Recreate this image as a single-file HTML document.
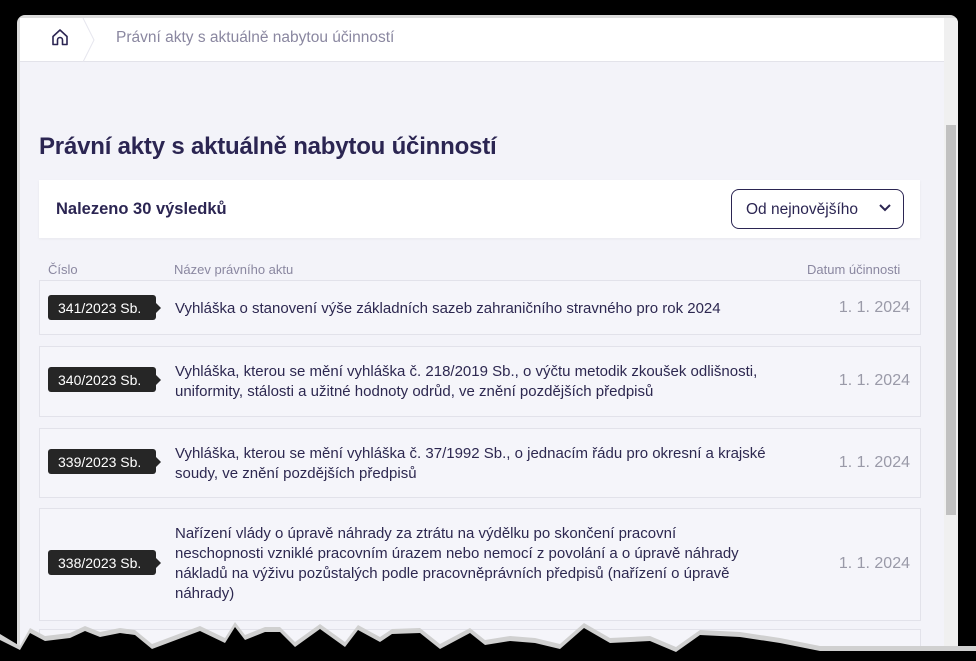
<!DOCTYPE html>
<html><head><meta charset="utf-8"><style>
*{box-sizing:border-box;margin:0;padding:0}
body{width:976px;height:661px;background:#000;position:relative;overflow:hidden;font-family:"Liberation Sans",sans-serif}
.win{position:absolute;left:17px;top:15px;width:941px;height:640px;background:#dcdcdc;border-radius:8px;overflow:hidden}
.page{position:absolute;left:3px;top:3px;width:924px;height:640px;background:#f3f3f9}
.hdr{position:absolute;left:0;top:0;width:924px;height:44px;background:#fff;border-bottom:1px solid #e3e3ea}
.crumb{position:absolute;left:96px;top:11px;font-size:15.5px;color:#8a87a0}
.sep{position:absolute;left:62px;top:0}
.sb{position:absolute;left:927px;top:3px;width:14px;height:640px;background:#f0f0f0}
.thumb{position:absolute;left:929px;top:110px;width:10px;height:390px;background:#c1c1c1}
h1{position:absolute;left:19px;top:115px;font-size:24px;font-weight:bold;color:#2b2552;letter-spacing:-0.2px}
.card{position:absolute;left:19px;top:162px;width:881px;height:58px;background:#fff;box-shadow:0 1px 3px rgba(0,0,0,.05)}
.card b{position:absolute;left:17px;top:20px;font-size:16.5px;color:#2b2552}
.sel{position:absolute;left:692px;top:9px;width:173px;height:40px;border:1px solid #2b2552;border-radius:8px;font-size:15.5px;color:#2b2552;padding:11px 0 0 14px}
.sel svg{position:absolute;right:12px;top:14px}
.th{position:absolute;top:244px;font-size:13px;color:#8a87a0}
.row{position:absolute;left:19px;width:882px;border:1px solid #e2e2ea;background:#f5f5fa}
.tag{position:absolute;left:8px;width:108px;height:25px;background:#262626;color:#fff;font-size:14px;border-radius:3px;padding:5px 0 0 10px}
.tag:after{content:"";position:absolute;right:-5px;top:8px;border-left:5px solid #262626;border-top:5px solid transparent;border-bottom:5px solid transparent}
.txt{position:absolute;left:135px;font-size:15px;line-height:20px;color:#2d2850;width:592px}
.dt{position:absolute;right:10px;font-size:16px;color:#9a9aa8}
</style></head><body>
<div class="win">
<div class="page">
 <div class="hdr">
  <svg style="position:absolute;left:31px;top:9px" width="18" height="20" viewBox="0 0 18 20"><path d="M2 9.5 L9 3 L16 9.5 V17.5 H11.5 V13 a2.5 2.5 0 0 0 -5 0 V17.5 H2 Z" fill="none" stroke="#2b2552" stroke-width="1.6" stroke-linejoin="round"/></svg>
  <svg class="sep" width="14" height="44"><path d="M1 0 L12 22 L1 44" fill="none" stroke="#e6e6ee" stroke-width="1"/></svg>
  <div class="crumb">Právní akty s aktuálně nabytou účinností</div>
 </div>
 <h1>Právní akty s aktuálně nabytou účinností</h1>
 <div class="card"><b>Nalezeno 30 výsledků</b>
  <div class="sel">Od nejnovějšího<svg width="12" height="8"><path d="M1 1 L6 6 L11 1" fill="none" stroke="#2b2552" stroke-width="2"/></svg></div>
 </div>
 <div class="th" style="left:28px">Číslo</div>
 <div class="th" style="left:154px">Název právního aktu</div>
 <div class="th" style="left:787px">Datum účinnosti</div>

 <div class="row" style="top:262px;height:55px"><div class="tag" style="top:14px">341/2023 Sb.</div><div class="txt" style="top:18px">Vyhláška o stanovení výše základních sazeb zahraničního stravného pro rok 2024</div><div class="dt" style="top:18px">1. 1. 2024</div></div>
 <div class="row" style="top:328px;height:71px"><div class="tag" style="top:20px">340/2023 Sb.</div><div class="txt" style="top:15px">Vyhláška, kterou se mění vyhláška č. 218/2019 Sb., o výčtu metodik zkoušek odlišnosti, uniformity, stálosti a užitné hodnoty odrůd, ve znění pozdějších předpisů</div><div class="dt" style="top:25px">1. 1. 2024</div></div>
 <div class="row" style="top:410px;height:70px"><div class="tag" style="top:20px">339/2023 Sb.</div><div class="txt" style="top:15px">Vyhláška, kterou se mění vyhláška č. 37/1992 Sb., o jednacím řádu pro okresní a krajské soudy, ve znění pozdějších předpisů</div><div class="dt" style="top:25px">1. 1. 2024</div></div>
 <div class="row" style="top:490px;height:113px"><div class="tag" style="top:41px">338/2023 Sb.</div><div class="txt" style="top:15px">Nařízení vlády o úpravě náhrady za ztrátu na výdělku po skončení pracovní<br>neschopnosti vzniklé pracovním úrazem nebo nemocí z povolání a o úpravě náhrady<br>nákladů na výživu pozůstalých podle pracovněprávních předpisů (nařízení o úpravě<br>náhrady)</div><div class="dt" style="top:46px">1. 1. 2024</div></div>
 <div class="row" style="top:611px;height:40px"></div>
</div>
<div class="sb"></div><div class="thumb"></div>
</div>
<svg style="position:absolute;left:0;top:620px" width="976" height="41">
<polygon fill="#d0d0d0" points="0,41 0,14 20,26 30,8 45,16 70,13 85,6 100,12 120,8 135,10 152,24 200,6 225,18 235,2 245,15 265,7 280,7 295,22 320,4 345,22 358,5 380,17 392,9 420,8 440,24 470,8 485,20 510,16 535,18 560,24 584,3 610,18 650,16 676,27 700,10 740,12 780,18 820,26 958,26 976,26 976,41"/>
<polygon fill="#000" points="0,41 0,20 20,30 30,13 45,21 70,18 85,11 100,17 120,13 135,15 152,29 200,11 225,23 235,7 245,20 265,12 280,12 295,27 320,9 345,27 358,10 380,22 392,14 420,13 440,29 470,13 485,25 510,21 535,23 560,29 584,8 610,23 650,21 676,32 700,15 740,17 780,23 820,31 958,31 976,31 976,41"/>
</svg>
</body></html>
